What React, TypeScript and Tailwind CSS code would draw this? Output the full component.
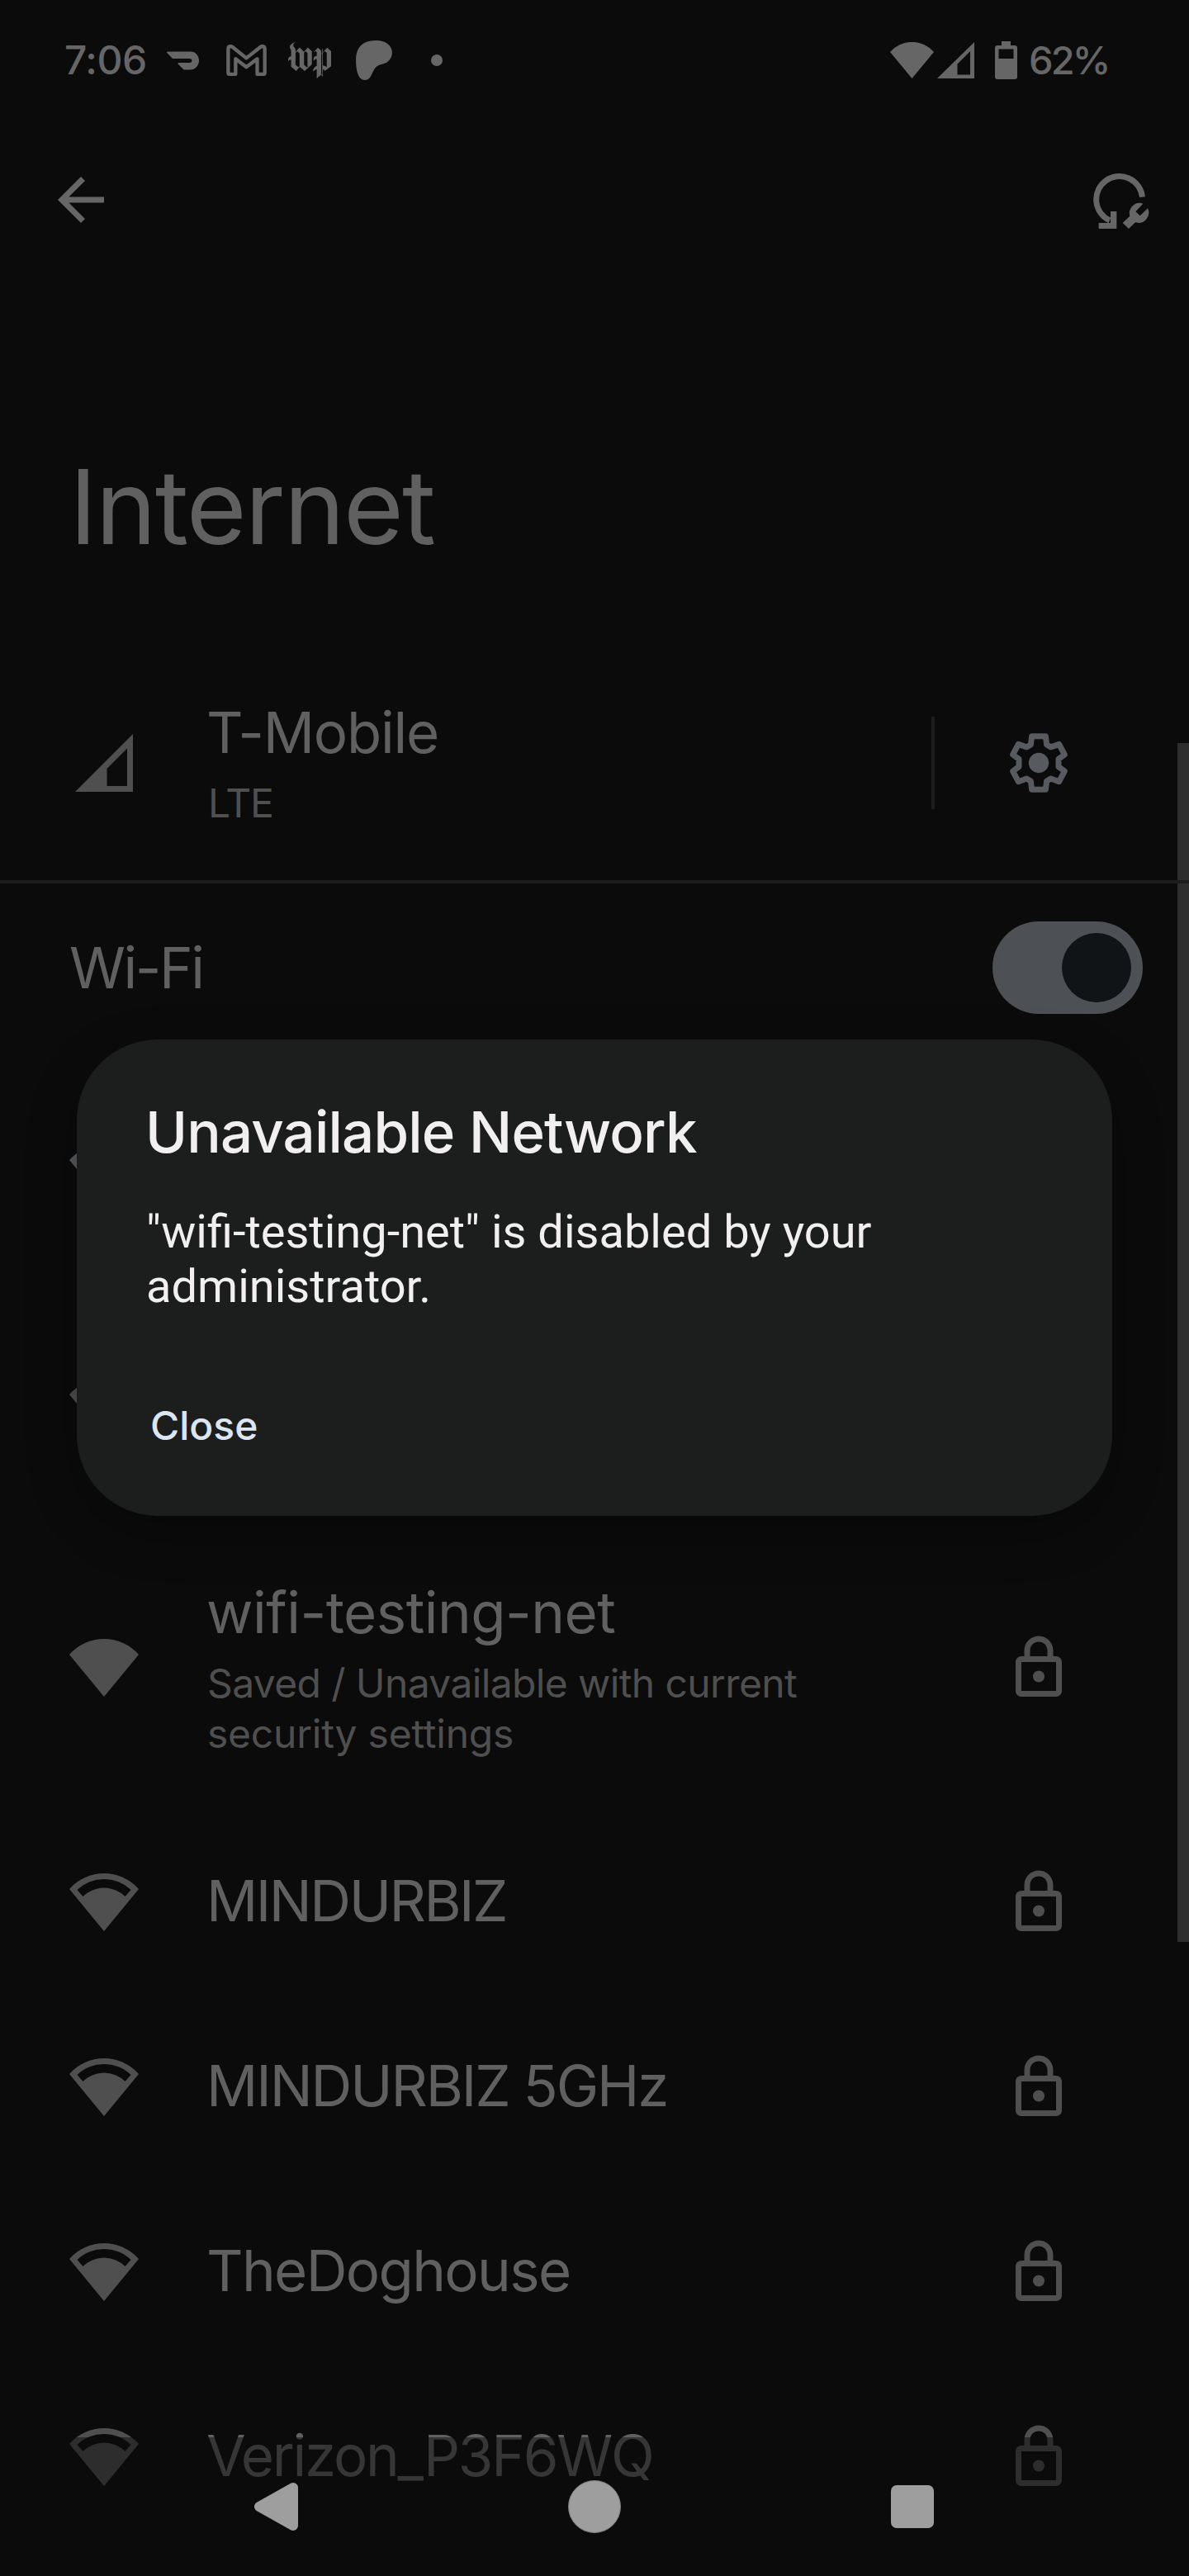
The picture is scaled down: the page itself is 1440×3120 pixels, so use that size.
import type { ReactNode } from "react";
import { SiDoordash, SiPatreon, SiThewashingtonpost } from "react-icons/si";

function WifiIcon({ full = false, className = "text-[#4f4f4f]" }: { full?: boolean; className?: string }) {
  return (
    <svg viewBox="0 0 84 84" className={`size-[84px] shrink-0 ${className}`} fill="currentColor">
      {full ? (
        <path d="M0 26A56 56 0 0 1 84 26L42 77Z" />
      ) : (
        <path
          fillRule="evenodd"
          d="M0 26A56 56 0 0 1 84 26L42 77ZM9.5 27L16.5 35A36.5 36.5 0 0 1 67.5 35L74.5 27A47 47 0 0 0 9.5 27Z"
        />
      )}
    </svg>
  );
}

function LockIcon() {
  return (
    <svg viewBox="0 0 24 24" className="size-[84px] shrink-0 text-[#4f4f4f]" fill="currentColor">
      <path d="M18 8h-1V6c0-2.76-2.24-5-5-5S7 3.24 7 6v2H6c-1.1 0-2 .9-2 2v10c0 1.1.9 2 2 2h12c1.100 0 2-.9 2-2V10c0-1.100-.9-2-2-2zM9 6c0-1.660 1.340-3 3-3s3 1.340 3 3v2H9V6zm9 14H6V10h12v10z" />
      <circle cx="12" cy="15" r="2" />
    </svg>
  );
}

function Gear() {
  return (
    <svg viewBox="408 126 252 252" className="size-[84px] shrink-0 text-[#575a5e]" fill="currentColor">
      <path
        d="M509 155H559L563 186L578 194.500L608 184L628 222L606 238V266L628 282L608 320L578 309L563 318L559 349H509L505 318L490 309L460 320L440 282L462 266V238L440 222L460 184L490 194.500L505 186Z"
        fill="none"
        stroke="currentColor"
        strokeWidth="21"
        strokeLinejoin="round"
      />
      <circle cx="534" cy="252" r="36.500" />
    </svg>
  );
}

function StatusBar() {
  return (
    <header className="flex h-[145px] items-center pl-[78px] text-[#666666]">
      <span className="w-[124px] text-[48px] leading-[60px] font-medium tracking-[-0.45px] whitespace-nowrap">7:06</span>
      <SiDoordash className="mt-[2px] size-[39px]" />
      <svg viewBox="642 69 147 114" className="ml-[33px] h-[38px] w-[49px]" fill="none" stroke="currentColor" strokeWidth="13" strokeLinejoin="round">
        <path d="M649 172V86Q649 75 657 75Q661 75 665 78L715 118L766 78Q769 75 774 75Q782 76 782 86V172Q782 176.500 778 176.500H754.500V121L715 151L676 121V176.500H653Q649 176.500 649 172Z" />
      </svg>
      <SiThewashingtonpost className="ml-[26px] size-[52px]" />
      <SiPatreon className="ml-[28px] size-[48px]" />
      <span className="ml-[45px] size-[14px] rounded-full bg-[#666666]" />
      <svg viewBox="0 0 53 44" className="ml-auto h-[44px] w-[53px]" fill="currentColor">
        <path d="M0 12A35 35 0 0 1 53 12L26.500 44Z" />
      </svg>
      <svg viewBox="0 0 45 44" className="ml-[4px] h-[44px] w-[45px]" fill="currentColor">
        <path fillRule="evenodd" d="M45 0V44H0ZM40 11L24.500 26.500V39.500H40Z" />
      </svg>
      <svg viewBox="0 0 27 46" className="ml-[25px] h-[46px] w-[27px]" fill="currentColor">
        <path fillRule="evenodd" d="M8 0H19V5H24Q27 5 27 8V43Q27 46 24 46H3Q0 46 0 43V8Q0 5 3 5H8ZM4.500 9.500V21H22.500V9.500Z" />
      </svg>
      <span className="ml-[14px] w-[194px] text-[47px] leading-[60px] font-medium tracking-[-2.9px] whitespace-nowrap">62%</span>
    </header>
  );
}

function AppBar() {
  return (
    <div className="flex h-[194px] items-center justify-between pr-[47px] pl-[56px] text-[#666666]">
      <svg viewBox="0 0 24 24" className="size-[84px]" fill="currentColor">
        <path d="M20 11H7.830l5.590-5.590L12 4l-8 8 8 8 1.410-1.410L7.830 13H20v-2z" />
      </svg>
      <svg viewBox="70 81 210 210" className="size-[70px]" fill="currentColor">
        <path d="M251.500 176A84 84 0 1 0 133 261" fill="none" stroke="currentColor" strokeWidth="21" />
        <path d="M136 228H158V291H93V270H136Z" />
        <path d="M180 270L206 245A37 37 0 0 1 254 200L227 229L243 244L271 217A37 37 0 0 1 226 268L202 291Z" />
      </svg>
    </div>
  );
}

function Row({
  icon,
  children,
  trailing,
  height,
  offset = "pb-[4px]",
}: {
  icon: ReactNode;
  children?: ReactNode;
  trailing?: ReactNode;
  height: string;
  offset?: string;
}) {
  return (
    <div className={`flex items-center pr-[140px] pl-[84px] ${height}`}>
      {icon}
      <div className={`ml-[82px] flex-1 ${offset}`}>{children}</div>
      {trailing}
    </div>
  );
}

function Name({ children, tracking }: { children: ReactNode; tracking: string }) {
  return <p className={`text-[69px] leading-[80px] whitespace-nowrap text-[#606060] ${tracking}`}>{children}</p>;
}

const networks = [
  { name: "MINDURBIZ", tracking: "tracking-[-2.5px]" },
  { name: "MINDURBIZ 5GHz", tracking: "tracking-[-2.1px]" },
  { name: "TheDoghouse", tracking: "tracking-[-1.64px]" },
  { name: "Verizon_P3F6WQ", tracking: "tracking-[-2.26px]" },
];

function Dialog() {
  return (
    <div
      role="dialog"
      className="absolute top-[1259px] left-[93px] h-[577px] w-[1254px] rounded-[98px] bg-[#1c1e1d] pt-[72px] pl-[84px] text-[#f2eff0] shadow-[0_20px_60px_rgba(0,0,0,0.3)]"
    >
      <h2 className="-ml-px text-[69px] leading-[80px] font-medium tracking-[-0.83px]">Unavailable Network</h2>
      <p className="mt-[48px] w-[1000px] font-['Roboto',sans-serif] text-[56px] leading-[66px]">
        "wifi-testing-net" is disabled by your
        <br />
        administrator.
      </p>
      <button className="mt-[106px] ml-[5px] block text-[48px] leading-[60px] font-medium text-[#dce6f2]">Close</button>
    </div>
  );
}

function NavBar() {
  return (
    <nav className="absolute inset-x-0 bottom-0 flex h-[168px] items-center bg-[#0b0b0b]/50 pl-[307px] text-[#9e9e9e]">
      <svg viewBox="0 0 54 60" className="h-[60px] w-[54px]" fill="currentColor" stroke="currentColor" strokeWidth="12" strokeLinejoin="round">
        <path d="M7 30L48 7V53Z" />
      </svg>
      <span className="ml-[327px] size-[64px] rounded-full border border-[#7e7e7e] bg-[#9e9e9e]" />
      <span className="ml-[327px] size-[52px] rounded-[7px] bg-[#9e9e9e]" />
    </nav>
  );
}

export default function App() {
  return (
    <div className="relative h-[3120px] w-[1440px] overflow-hidden bg-[#0b0b0b] font-['Inter',sans-serif]">
      <div className="absolute top-[900px] right-0 h-[1452px] w-[14px] bg-[#2e2e2e]" />
      <div className="relative">
        <StatusBar />
        <AppBar />
        <h1 className="h-[443px] pt-[200px] pl-[84px] text-[125px] leading-[150px] tracking-[-1.82px] text-[#606060]">Internet</h1>

        <Row
          height="h-[284px]"
          offset="pt-[2px]"
          icon={
            <svg viewBox="0 0 84 84" className="size-[84px] shrink-0 text-[#4f4f4f]" fill="currentColor">
              <path fillRule="evenodd" d="M77 7V77H7ZM70 24.500L45.500 49V70H70Z" />
            </svg>
          }
          trailing={
            <>
              <span className="mr-[84px] h-[112px] w-[4px] bg-[#1d1d1d]" />
              <Gear />
            </>
          }
        >
          <Name tracking="tracking-[-1.22px]">T-Mobile</Name>
          <p className="mt-[15px] pl-[2px] text-[48px] leading-[61px] tracking-[-1.25px] text-[#4f4f4f]">LTE</p>
        </Row>

        <div className="h-[4px] bg-[#1d1d1d]" />

        <div className="flex h-[209px] items-center justify-between pr-[56px] pb-[5px] pl-[84px]">
          <Name tracking="tracking-[-2.5px]">Wi-Fi</Name>
          <div className="flex h-[112px] w-[182px] items-center justify-end rounded-full bg-[#4d5054] pr-[14px]">
            <span className="size-[84px] rounded-full bg-[#101416]" />
          </div>
        </div>

        <Row height="h-[284px]" icon={<WifiIcon full className="text-[#575a5e]" />} />
        <Row height="h-[284px]" icon={<WifiIcon full />} />
        <Row height="h-[345px]" offset="pt-[3px]" icon={<WifiIcon full />} trailing={<LockIcon />}>
          <Name tracking="tracking-[-0.5px]">wifi-testing-net</Name>
          <p className="mt-[15px] pl-px text-[48px] leading-[61px] whitespace-nowrap text-[#4f4f4f]">
            <span className="tracking-[-0.62px]">Saved / Unavailable with current</span>
            <br />
            <span className="tracking-[-0.23px]">security settings</span>
          </p>
        </Row>
        {networks.map((n) => (
          <Row key={n.name} height="h-[224px]" icon={<WifiIcon />} trailing={<LockIcon />}>
            <Name tracking={n.tracking}>{n.name}</Name>
          </Row>
        ))}
      </div>
      <Dialog />
      <NavBar />
    </div>
  );
}
